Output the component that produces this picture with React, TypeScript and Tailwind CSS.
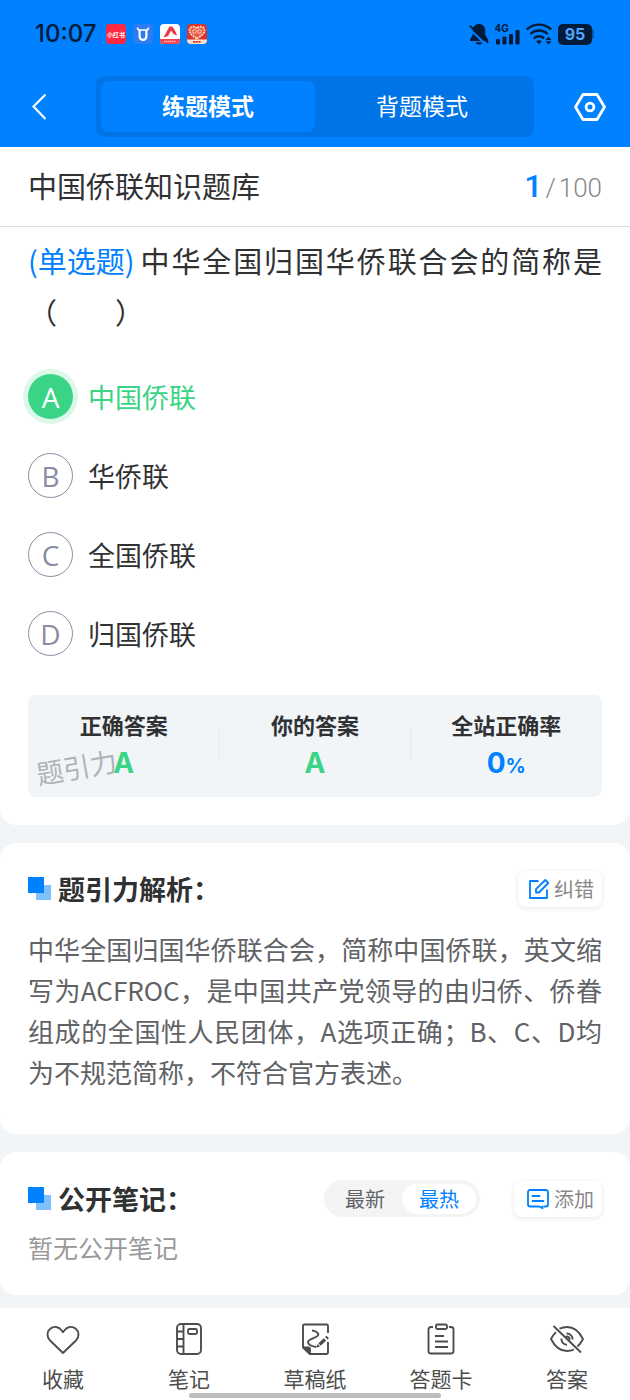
import React, { useState } from 'react';
import clsx from 'clsx';

const OPTIONS = [
  { key: 'A', text: '中国侨联' },
  { key: 'B', text: '华侨联' },
  { key: 'C', text: '全国侨联' },
  { key: 'D', text: '归国侨联' },
];

const ANSWER = 'A';

const StatusBar: React.FC = () => (
  <div className="flex h-6 items-center justify-between pl-[35px] pr-9 text-[#031a38]">
    <div className="flex items-center gap-[7px]">
      <span className="mr-[3px] font-['Inter',sans-serif] text-2xl leading-6 font-medium">10:07</span>
      <svg width="20" height="20" viewBox="0 0 20 20">
        <rect width="20" height="20" rx="4" fill="#ff2741" />
        <text x="10" y="12.5" textAnchor="middle" fontSize="6" fontWeight="700" fill="#fff">小红书</text>
      </svg>
      <svg width="20" height="20" viewBox="0 0 20 20">
        <rect width="20" height="20" rx="4" fill="#2f7cf0" />
        <path d="M4.5 3.5c0 1.8.8 2.5 2.3 2.5h6.4c1.5 0 2.3-.7 2.3-2.5" fill="none" stroke="#fff" strokeWidth="1.5" />
        <path d="M6.6 6v6.5a3.4 3.4 0 0 0 6.8 0V6" fill="none" stroke="#fff" strokeWidth="2.2" />
      </svg>
      <svg width="20" height="20" viewBox="0 0 20 20">
        <rect width="20" height="20" rx="4" fill="#fff" />
        <path d="M0 15h20v1a4 4 0 0 1-4 4H4a4 4 0 0 1-4-4z" fill="#f2404c" />
        <path d="M3.5 13.5 9.5 2.5h2.5c2 2 4 5.5 5 9l-3.5-1.500-2.500-3.500-3 5.500z" fill="#ee3546" />
        <path d="M4 17.5h12" stroke="#ffb3b8" strokeWidth="1.5" strokeDasharray="1.5 .5" />
      </svg>
      <svg width="20" height="20" viewBox="0 0 20 20">
        <rect width="20" height="20" rx="4" fill="#dc3327" />
        <path d="M0 15.5h20v.5a4 4 0 0 1-4 4H4a4 4 0 0 1-4-4z" fill="#fbe3d2" />
        <path
          d="M10 14.5C5.5 12 2.500 9.500 2.500 6.300c0-4 5.500-5 7.500-1.600 2-3.400 7.500-2.400 7.500 1.600 0 3.200-3 5.700-7.500 8.200z"
          fill="#e9594a"
          stroke="#fbd9c4"
          strokeWidth="1.8"
          strokeDasharray="2 .8"
        />
        <circle cx="7.5" cy="7.5" r="1.8" fill="none" stroke="#fbd9c4" />
        <circle cx="12.5" cy="7.5" r="1.8" fill="none" stroke="#fbd9c4" />
        <path d="M6 17.8h8" stroke="#dc3327" strokeWidth="1.8" strokeDasharray="2.2 .5" />
      </svg>
    </div>
    <div className="flex items-center gap-[6px]">
      <svg width="20" height="22" viewBox="0 0 20 22" fill="currentColor">
        <path d="M10 1c-4 0-6.3 3-6.3 6.5V12L1 16.5V18h18v-1.5L16.3 12V7.5C16.3 4 14 1 10 1z" />
        <path d="M6.5 19.2h7c-.6 1.5-1.9 2.3-3.5 2.3s-2.9-.8-3.5-2.3z" />
        <path d="M-1 4.8 17 21.500" stroke="#0081ff" strokeWidth="2" />
        <path d="M.8 2.6 19.2 19.800" stroke="currentColor" strokeWidth="1.9" />
      </svg>
      <svg width="25" height="22" viewBox="0 0 25 22" fill="currentColor">
        <text x="-.5" y="9" fontSize="10" fontWeight="700" fontFamily="Inter, sans-serif">4G</text>
        <rect x="1" y="16" width="4" height="5.5" rx="1.2" />
        <rect x="7.5" y="13.5" width="4" height="8" rx="1.2" />
        <rect x="14" y="11" width="4" height="10.5" rx="1.2" />
        <rect x="20.5" y="7" width="4" height="14.5" rx="1.2" />
      </svg>
      <svg width="26" height="22" viewBox="0 0 26 22" fill="none" stroke="currentColor" strokeWidth="2.4">
        <path d="M.8 6.500c7-6.500 17.400-6.500 24.400 0" />
        <path d="M4.300 11c5-4.700 12.400-4.700 17.400 0" />
        <path d="M7.800 15.300c3-2.700 7.400-2.700 10.400 0" />
        <path d="M10.200 18.200c1.700-1.200 3.900-1.200 5.600 0L13 21.300z" fill="currentColor" stroke="none" />
        <path d="m22.500 13.800 3 3.200h-6zM22.500 21.500l3-3.200h-6z" fill="currentColor" stroke="none" />
      </svg>
      <span className="flex items-center">
        <span className="flex h-[21px] w-[34px] items-center justify-center rounded-[5px] bg-[#031a38] font-['Inter',sans-serif] text-base leading-5 font-bold text-[#4da6ff]">
          95
        </span>
        <span className="h-[10px] w-[2px] rounded-r bg-[#0358ae]" />
      </span>
    </div>
  </div>
);

const SquaresIcon: React.FC = () => (
  <svg width="24" height="24" viewBox="0 0 24 24">
    <rect x="8" y="8" width="15" height="15" fill="#80c0ff" />
    <rect x="0" y="0" width="16" height="16" fill="#0081ff" />
  </svg>
);

const NAV_ITEMS = [
  {
    label: '收藏',
    icon: (
      <path d="M17 31 3.800 18.200c-3.200-3.400-3-8.700.4-11.500 3.600-2.900 8.700-2.200 11.300 1.500L17 10.200l1.500-2c2.600-3.700 7.700-4.400 11.300-1.500 3.400 2.800 3.600 8.100.4 11.500z" />
    ),
  },
  {
    label: '笔记',
    icon: (
      <>
        <rect x="5" y="2" width="24" height="30" rx="4" />
        <path d="M11.500 2v30M5 9.500h6.500M5 17h6.500M5 24.500h6.500" />
        <rect x="16" y="7" width="9" height="5" rx="1.5" />
      </>
    ),
  },
  {
    label: '草稿纸',
    icon: (
      <>
        <path d="M30 11V4a1.500 1.500 0 0 0-1.500-1.500h-22A1.500 1.500 0 0 0 5 4v21l7 7h16.500a1.500 1.500 0 0 0 1.500-1.500V20" />
        <path d="M5 25.500h5.500a1.500 1.500 0 0 1 1.500 1.500v5z" fill="currentColor" />
        <path d="M14 8.500c3.500.5 7.500 2.500 6 5-1.500 2.300-10 3.500-10 6.500s5 4.500 8.500 5" />
        <path d="m21.500 22.500 5.500-5" strokeWidth="3.400" />
        <path d="m28.300 16.300 1.500-1.400" strokeWidth="3.400" />
        <path d="m19 25 .8-2.400 1.600 1.600z" fill="currentColor" strokeWidth="1" />
      </>
    ),
  },
  {
    label: '答题卡',
    icon: (
      <>
        <path d="M9 5H7a2.500 2.500 0 0 0-2.500 2.500V29A2.500 2.500 0 0 0 7 31.500h20a2.500 2.500 0 0 0 2.500-2.500V7.500A2.500 2.500 0 0 0 27 5h-2" />
        <rect x="12" y="2.5" width="11" height="4.5" rx="1.5" />
        <path d="M11 14h9M11 19.500h13M11 25h13" />
      </>
    ),
  },
  {
    label: '答案',
    icon: (
      <>
        <path d="M9.500 6.700C12 5.600 14.500 5 17 5c6.500 0 12.300 4.500 16 12-1.500 3-3.300 5.500-5.500 7.500M24 27.500c-2.200 1-4.500 1.500-7 1.500-6.500 0-12.300-4.500-16-12 1.300-2.700 3-5 5-6.900" />
        <path d="M16.500 11.500a5.600 5.600 0 0 1 6 6M17 22.700a5.600 5.600 0 0 1-5.600-6.200" />
        <path d="M15.500 15.200a2.400 2.400 0 0 1 3.500 3.200" />
        <path d="m3.500 4 27.500 26.500" />
      </>
    ),
  },
];

const App: React.FC = () => {
  const [mode, setMode] = useState('练题模式');
  const [sort, setSort] = useState('最热');
  const [picked, setPicked] = useState('A');

  return (
    <div className="flex min-h-screen flex-col bg-[#f1f5f8] font-['Noto_Sans_CJK_SC',sans-serif] text-[#303133]">
      <header className="bg-[#0081ff] pt-[22px] pb-[10px]">
        <StatusBar />
        <div className="mt-[30px] grid grid-cols-[96px_1fr_96px] items-center">
          <button type="button" aria-label="返回" className="pl-8 text-white">
            <svg width="14" height="28" viewBox="0 0 14 28" fill="none" stroke="currentColor" strokeWidth="2.2">
              <path d="M13.500 1.500 1.500 13.500 13.500 26" />
            </svg>
          </button>
          <div className="grid grid-cols-2 rounded-lg bg-[#0074e6] p-[5px]">
            {['练题模式', '背题模式'].map((name) => (
              <button
                key={name}
                type="button"
                onClick={() => setMode(name)}
                className={clsx(
                  'h-[51px] rounded-lg pb-[3px] text-[23px] leading-7 text-white',
                  mode === name && 'bg-[#0081ff] font-bold',
                )}
              >
                {name}
              </button>
            ))}
          </div>
          <button type="button" aria-label="设置" className="flex justify-end pr-6 text-white">
            <svg width="32" height="30" viewBox="0 0 32 30" fill="none" stroke="currentColor" strokeWidth="2.8" strokeLinejoin="round">
              <path d="M9 2.500h14L30.500 15 23 27.500H9L1.500 15z" />
              <circle cx="16" cy="15" r="3.9" />
            </svg>
          </button>
        </div>
      </header>

      <main className="flex flex-1 flex-col">
        <section className="rounded-b-2xl bg-white pb-7">
          <div className="flex h-20 items-center justify-between border-b border-[#dcdcdc] px-7 pb-[3px]">
            <h1 className="text-[29px] leading-10">中国侨联知识题库</h1>
            <div className="flex items-baseline gap-[3px] pt-1 font-['Roboto',sans-serif] text-[26px] leading-10 font-light text-[#888]">
              <span className="text-[32px] font-medium text-[#0081ff]">1</span>
              <span>/</span>
              <span>100</span>
            </div>
          </div>

          <div className="px-7">
            <p className="pt-2 text-justify text-[29px] leading-[51px]">
              <span className="mr-1 inline-block text-[#0081ff]">(单选题)</span>
              中华全国归国华侨联合会的简称是（　　）
            </p>

            <div role="radiogroup" aria-label="选项" className="pt-5">
              {OPTIONS.map(({ key, text }) => {
                const active = picked === key;
                return (
                  <label key={key} className={clsx('flex h-[79px] items-center gap-[15px] text-[27px] leading-10', active && 'text-[#3ad486]')}>
                    <input type="radio" name="option" value={key} checked={active} onChange={() => setPicked(key)} className="sr-only" />
                    <span
                      className={clsx(
                        "flex size-[45px] items-center justify-center rounded-full font-['Open_Sans',sans-serif] text-[28px]",
                        active ? 'bg-[#3ad486] text-white ring-[5px] ring-[#dcf8e9]' : 'border border-[#8a8ca3] text-[#8a8ca3]',
                      )}
                    >
                      {key}
                    </span>
                    <span>{text}</span>
                  </label>
                );
              })}
            </div>

            <div className="relative mt-[22px] grid h-[102px] grid-cols-3 rounded-lg bg-[#f1f5f8] pt-[11px] text-center">
              <div>
                <div className="text-[22px] leading-9 font-bold">正确答案</div>
                <div className="font-['Inter',sans-serif] text-[28px] leading-[42px] font-bold text-[#3ad486]">{ANSWER}</div>
              </div>
              <div className="relative">
                <div className="absolute top-5 left-0 h-9 w-px bg-[#e6eaee]" />
                <div className="text-[22px] leading-9 font-bold">你的答案</div>
                <div className="font-['Inter',sans-serif] text-[28px] leading-[42px] font-bold text-[#3ad486]">{picked}</div>
                <div className="absolute top-5 right-0 h-9 w-px bg-[#e6eaee]" />
              </div>
              <div>
                <div className="text-[22px] leading-9 font-bold">全站正确率</div>
                <div className="font-['Inter',sans-serif] text-[28px] leading-[42px] font-bold text-[#0081ff]">
                  0<span className="text-xl">%</span>
                </div>
              </div>
              <span className="pointer-events-none absolute top-[52px] left-2 -rotate-10 text-[27px] leading-10 text-[#888] opacity-60">
                题引力
              </span>
            </div>
          </div>
        </section>

        <section className="mt-[18px] rounded-2xl bg-white px-7 pt-7 pb-[42px]">
          <div className="flex items-center justify-between">
            <h2 className="flex items-center gap-[6px] text-[27px] leading-9 font-bold">
              <SquaresIcon />
              题引力解析：
            </h2>
            <button type="button" className="flex h-9 items-center gap-1 rounded-lg bg-white px-2 text-xl text-[#888] shadow-[0_1px_5px_rgba(0,0,0,0.1)]">
              <svg width="24" height="24" viewBox="0 0 24 24" fill="none" stroke="#0081ff" strokeWidth="1.8" strokeLinejoin="round">
                <path d="M12.500 4H4v17h17v-8.500" />
                <path d="M10 15.500v-3.300L19.300 3l3 3L13 15.500z" />
              </svg>
              纠错
            </button>
          </div>
          <p className="mt-[21px] text-justify text-[26px] leading-[41px] text-[#606266]">
            中华全国归国华侨联合会，简称中国侨联，英文缩写为ACFROC，是中国共产党领导的由归侨、侨眷组成的全国性人民团体，A选项正确；B、C、D均为不规范简称，不符合官方表述。
          </p>
        </section>

        <section className="mt-[18px] rounded-2xl bg-white px-7 pt-7 pb-7">
          <div className="flex items-center justify-between">
            <h2 className="flex items-center gap-[6px] text-[27px] leading-9 font-bold">
              <SquaresIcon />
              公开笔记：
            </h2>
            <div className="flex items-center gap-[34px]">
              <div className="flex h-[37px] items-center rounded-full bg-[#f4f4f4] px-1 text-xl">
                {['最新', '最热'].map((name) => (
                  <button
                    key={name}
                    type="button"
                    onClick={() => setSort(name)}
                    className={clsx(
                      'h-[30px] w-[74px] rounded-full leading-[30px]',
                      sort === name ? 'bg-white text-[#0081ff]' : 'text-[#606266]',
                    )}
                  >
                    {name}
                  </button>
                ))}
              </div>
              <button type="button" className="flex h-9 items-center gap-1 rounded-lg bg-white px-2 pl-3 text-xl text-[#888] shadow-[0_1px_5px_rgba(0,0,0,0.1)]">
                <svg width="24" height="24" viewBox="0 0 24 24" fill="none" stroke="#0081ff" strokeWidth="1.8" strokeLinejoin="round" strokeLinecap="round">
                  <path d="M18.500 19.500H20a2 2 0 0 0 2-2V5a2 2 0 0 0-2-2H4a2 2 0 0 0-2 2v12.500a2 2 0 0 0 2 2h9.500l3 1.800v-1.800" />
                  <path d="M6.500 9h7M6.500 14h11" />
                </svg>
                添加
              </button>
            </div>
          </div>
          <p className="mt-[10px] text-[25px] leading-10 text-[#999]">暂无公开笔记</p>
        </section>
      </main>

      <nav className="relative mt-[13px] grid h-[92px] grid-cols-5 bg-white text-[#4d4d4d]">
        {NAV_ITEMS.map(({ label, icon }) => (
          <button key={label} type="button" className="flex flex-col items-center pt-[14px] text-[21px] leading-8">
            <svg width="34" height="34" viewBox="0 0 34 34" fill="none" stroke="currentColor" strokeWidth="1.9" strokeLinejoin="round">
              {icon}
            </svg>
            <span className="mt-[6px]">{label}</span>
          </button>
        ))}
        <div className="absolute bottom-[2px] left-[30%] h-[5px] w-[40%] rounded-full bg-[#bdbdbd]" />
      </nav>
    </div>
  );
};

export default App;
